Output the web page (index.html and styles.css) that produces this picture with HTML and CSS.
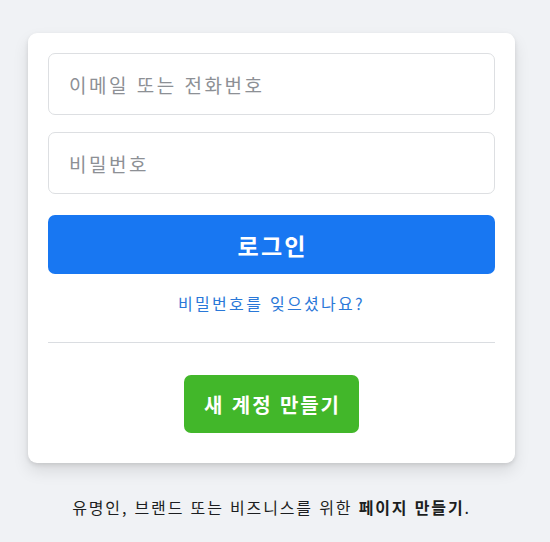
FILE: index.html
```html
<!DOCTYPE html>
<html lang="ko">
<head>
<meta charset="utf-8">
<link rel="stylesheet" href="styles.css">
</head>
<body>
<div class="page">
  <form class="card">
    <input class="field" type="text" placeholder="이메일 또는 전화번호">
    <input class="field field-second" type="password" placeholder="비밀번호">
    <button class="login" type="button">로그인</button>
    <a class="forgot" href="#">비밀번호를 잊으셨나요?</a>
    <div class="divider"></div>
    <div class="create-row">
      <button class="create" type="button">새 계정 만들기</button>
    </div>
  </form>
  <p class="footer"><span>유명인, 브랜드 또는 비즈니스를 위한 </span><b>페이지 만들기</b>.</p>
</div>
</body>
</html>
```
FILE: styles.css
```css
html, body {
  margin: 0;
  padding: 0;
  background: #f0f2f5;
  font-family: "Noto Sans CJK KR", "Noto Sans", sans-serif;
}
.page {
  padding: 33px 0 0 28px;
  width: 487px;
}
.card {
  background: #fff;
  border-radius: 9px;
  box-shadow: 0 2px 4px rgba(0,0,0,.1), 0 8px 16px rgba(0,0,0,.1);
  padding: 20px 20px 30px;
  display: flex;
  flex-direction: column;
}
.field {
  box-sizing: border-box;
  height: 62px;
  border: 1px solid #dddfe2;
  border-radius: 7px;
  padding: 0 20px;
  font-family: inherit;
  font-size: 19px;
  letter-spacing: 2.5px;
  color: #1c1e21;
  outline: none;
}
.field::placeholder { color: #8d9095; }
.field-second { margin-top: 17px; }
.login {
  margin-top: 21px;
  height: 59px;
  border: none;
  border-radius: 7px;
  background: #1877f2;
  color: #fff;
  font-family: inherit;
  font-size: 23px;
  font-weight: 700;
  letter-spacing: 2.3px;
  text-indent: 2.3px;
}
.forgot {
  margin-top: 18px;
  text-align: center;
  color: #2a78d8;
  text-decoration: none;
  font-size: 16px;
  line-height: 22px;
  letter-spacing: 2.3px;
}
.divider {
  margin-top: 28px;
  border-bottom: 1px solid #dadde1;
}
.create-row {
  margin-top: 32px;
  display: flex;
  justify-content: center;
}
.create {
  width: 175px;
  height: 58px;
  border: none;
  border-radius: 7px;
  background: #42b72a;
  color: #fff;
  font-family: inherit;
  font-size: 20px;
  font-weight: 700;
  letter-spacing: 1.9px;
  text-indent: 1.9px;
}
.footer {
  margin: 33px 0 0;
  text-align: center;
  font-size: 16px;
  color: #1c1e21;
  line-height: 22px;
  letter-spacing: 1.85px;
}
.footer b { font-weight: 700; }
```
